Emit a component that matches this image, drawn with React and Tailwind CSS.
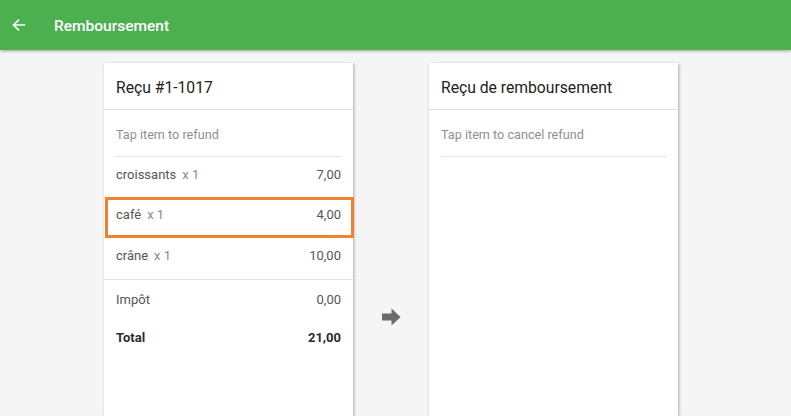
import React from "react";

function Row({ name, qty, price, selected, first }) {
  return (
    <div className={selected
      ? "flex h-[41px] items-center justify-between border-[3px] border-[#f18031] ml-[1px] -mr-[1px] pb-[6px] pl-[8px] pr-[10px]"
      : first
        ? "flex h-[40px] items-center justify-between px-3 pb-[5px]"
        : "flex h-[41px] items-center justify-between px-3 pb-[6px]"}>
      <span className="flex gap-[6px]">
        <span className="text-[#555555]">{name}</span>
        <span className="text-[#8a8a8a]">x 1</span>
      </span>
      <span className="text-[#555555]">{price}</span>
    </div>
  );
}

function Card({ title, children }) {
  return (
    <div className="flex w-[249px] flex-col bg-white shadow-[1px_1px_3px_rgba(0,0,0,0.3)]">
      <div className="flex h-[47px] items-center border-b border-[#e0e0e0] px-3 pt-[4px] text-[15.7px] font-normal text-[#222222]">{title}</div>
      {children}
    </div>
  );
}

export default function App() {
  return (
    <div className="flex h-[416px] w-[791px] flex-col overflow-hidden bg-[#f5f5f5] font-['Roboto',sans-serif] text-[13px]">
      <header className="flex h-[50px] shrink-0 items-center bg-[#4caf50] text-white shadow-[0_1px_3px_rgba(0,0,0,0.35)]">
        <svg className="ml-[12px] mb-[1px]" width="14" height="14" viewBox="0 0 14 14" fill="none" stroke="white" strokeWidth="1.7">
          <path d="M13 7H2M7 1.6 1.6 7 7 12.4" />
        </svg>
        <span className="ml-[28px] mt-[3px] text-[15.5px] font-medium">Remboursement</span>
      </header>
      <main className="flex flex-1 pl-[104px] pt-[13px]">
        <Card title="Reçu #1-1017">
          <div className="mx-3 flex h-[47px] items-center border-b border-[#e3e3e3] pt-[4px] text-[12.65px] text-[#8f8f8f]">Tap item to refund</div>
          <Row name="croissants" price="7,00" first />
          <Row name="café" price="4,00" selected />
          <Row name="crâne" price="10,00" />
          <div className="border-t border-[#e3e3e3] px-3 pt-[10px]">
            <div className="flex h-[19px] items-center justify-between text-[#555555]"><span>Impôt</span><span>0,00</span></div>
            <div className="mt-[19px] flex h-[19px] items-center justify-between font-bold text-[#2b2b2b]"><span>Total</span><span>21,00</span></div>
          </div>
        </Card>
        <div className="flex w-[76px] justify-center pl-[1px] pt-[245px] pr-[1px]">
          <svg width="19" height="18" viewBox="0 0 19 18" className="h-[18px]" fill="#6b6b6b">
            <path d="M0 5.5h9.5V0.5L18.5 9l-9 8.500v-5H0z" />
          </svg>
        </div>
        <Card title="Reçu de remboursement">
          <div className="mx-3 flex h-[47px] items-center border-b border-[#e3e3e3] pt-[4px] text-[12.65px] text-[#8f8f8f]">Tap item to cancel refund</div>
        </Card>
      </main>
    </div>
  );
}
